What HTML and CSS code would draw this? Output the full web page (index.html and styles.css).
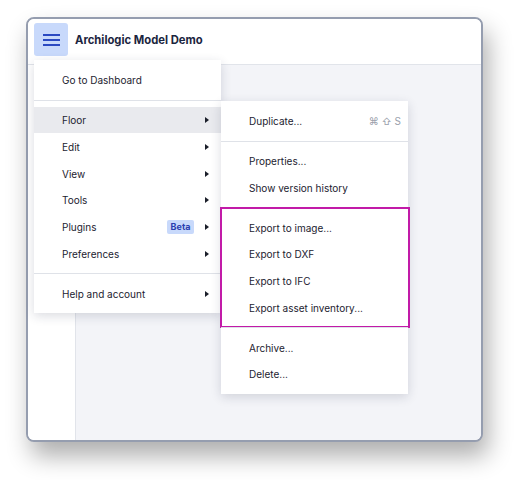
FILE: index.html
```html
<!DOCTYPE html>
<html>
<head>
<meta charset="utf-8">
<link rel="stylesheet" href="styles.css">
</head>
<body>
<div class="window">
  <header class="topbar">
    <button class="burger" aria-label="Menu">
      <svg width="17" height="12" viewBox="0 0 17 12"><rect x="0" y="0" width="17" height="2" fill="#2a49c2"/><rect x="0" y="5" width="17" height="2" fill="#2a49c2"/><rect x="0" y="10" width="17" height="2" fill="#2a49c2"/></svg>
    </button>
    <span class="title">Archilogic Model Demo</span>
  </header>
  <div class="body">
    <aside class="sidebar"></aside>
    <main class="canvas"></main>
  </div>

  <nav class="menu main-menu">
    <div class="group">
      <div class="item">Go to Dashboard</div>
    </div>
    <div class="group">
      <div class="item active">Floor<span class="arrow"></span></div>
      <div class="item">Edit<span class="arrow"></span></div>
      <div class="item">View<span class="arrow"></span></div>
      <div class="item">Tools<span class="arrow"></span></div>
      <div class="item">Plugins<span class="badge">Beta</span><span class="arrow"></span></div>
      <div class="item">Preferences<span class="arrow"></span></div>
    </div>
    <div class="group">
      <div class="item">Help and account<span class="arrow"></span></div>
    </div>
  </nav>

  <nav class="menu sub-menu">
    <div class="group">
      <div class="item">Duplicate...<span class="shortcut">⌘ ⇧ S</span></div>
    </div>
    <div class="group">
      <div class="item">Properties...</div>
      <div class="item">Show version history</div>
    </div>
    <div class="group highlight">
      <div class="item">Export to image...</div>
      <div class="item">Export to DXF</div>
      <div class="item">Export to IFC</div>
      <div class="item">Export asset inventory...</div>
    </div>
    <div class="group">
      <div class="item">Archive...</div>
      <div class="item">Delete...</div>
    </div>
  </nav>
</div>
</body>
</html>
```
FILE: styles.css
```css
* { box-sizing: border-box; }
html, body { margin: 0; padding: 0; background: #ffffff; }
body { font-family: Inter, "Noto Sans", sans-serif; color: #1c2230; padding-top: 17px; min-height: 480px; }

.window {
  position: relative;
  margin: 0 0 0 26px;
  width: 457px;
  height: 425px;
  border: 2px solid #959daf;
  border-radius: 8px;
  background: #ffffff;
  box-shadow: 5px 14px 24px rgba(0, 0, 0, 0.32);
  display: flex;
  flex-direction: column;
}

.topbar {
  height: 46px;
  flex: none;
  display: flex;
  align-items: flex-start;
  padding: 4px 0 0 6px;
  gap: 7px;
  border-bottom: 1px solid #e1e4ea;
  border-radius: 6px 6px 0 0;
  background: #fff;
}

.burger {
  width: 34px;
  height: 33px;
  border: none;
  border-radius: 3px;
  background: #c8d9fb;
  display: flex;
  align-items: center;
  justify-content: center;
  padding: 0;
}
.burger svg { display: block; }

.title {
  font-weight: 700;
  font-size: 11.25px;
  line-height: 34px;
  color: #1b2540;
}

.body {
  flex: 1;
  display: flex;
  border-radius: 0 0 6px 6px;
  overflow: hidden;
}
.sidebar {
  width: 48px;
  flex: none;
  background: #ffffff;
  border-right: 1px solid #e1e4ea;
}
.canvas {
  flex: 1;
  background: #f3f4f8;
}

.menu {
  position: absolute;
  width: 187px;
  background: #ffffff;
  box-shadow: 0 3px 10px rgba(30, 40, 70, 0.16);
  font-size: 10px;
}
.main-menu { left: 6px; top: 41px; }
.sub-menu { left: 193px; top: 81.7px; }

.group {
  padding: 6.67px 0;
  border-top: 1px solid #dfe2e8;
  position: relative;
}
.group:first-child { border-top: none; }
.group + .group { padding-top: 5.67px; }

.item {
  height: 26.67px;
  display: flex;
  align-items: center;
  padding: 1px 12px 0 28px;
}
.sub-menu .item { padding-right: 7px; }
.item.active { background: #e9eaee; }

.arrow {
  margin-left: auto;
  width: 0;
  height: 0;
  border-left: 4px solid #1b1f2a;
  border-top: 3px solid transparent;
  border-bottom: 3px solid transparent;
}
.badge + .arrow { margin-left: 11px; }

.badge {
  margin-left: auto;
  background: #c8d9fb;
  color: #2a3fb0;
  font-weight: 700;
  font-size: 9px;
  border-radius: 2px;
  padding: 0 3.5px;
  height: 13.5px;
  line-height: 13.5px;
}

.shortcut {
  margin-left: auto;
  color: #9aa0ab;
  font-size: 10px;
}

.highlight::after {
  content: "";
  position: absolute;
  left: -1.5px;
  right: -2px;
  top: -1px;
  bottom: -1px;
  border: 2px solid #c21aa8;
  pointer-events: none;
}
```
